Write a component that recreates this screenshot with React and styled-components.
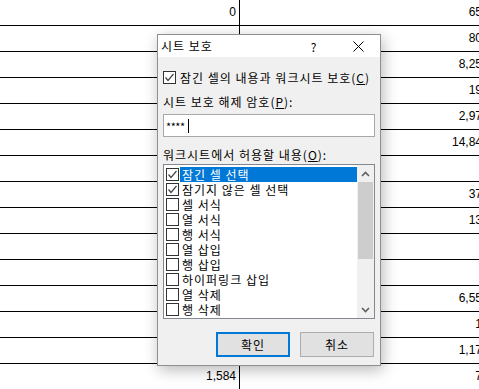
import React from "react";
import styled, { createGlobalStyle } from "styled-components";

const Global = createGlobalStyle`
  html, body { margin: 0; padding: 0; background: #fff; overflow: hidden; }
  body { font-family: "Noto Sans CJK KR", "Noto Sans", sans-serif; color: #000; }
  * { box-sizing: border-box; }
`;

const Page = styled.div`
  position: relative;
  width: 479px;
  height: 389px;
  overflow: hidden;
`;

const Sheet = styled.div`
  display: grid;
  grid-template-columns: 240px 246px;
  width: 486px;
`;

const Cell = styled.div`
  height: 26px;
  line-height: 25px;
  border-bottom: 1px solid #000;
  border-right: ${(p) => (p.$left ? "1px solid #000" : "none")};
  text-align: right;
  padding-right: ${(p) => (p.$left ? "3px" : "4px")};
  font-family: "Liberation Sans", Arial, sans-serif;
  font-size: 12px;
  white-space: nowrap;
`;

const Dialog = styled.div`
  position: absolute;
  left: 157px;
  top: 34px;
  width: 224px;
  height: 332px;
  border: 1px solid #8f8f8f;
  background: #f0f0f0;
  box-shadow: 2px 4px 14px rgba(0, 0, 0, 0.28);
  display: flex;
  flex-direction: column;
  font-size: 12px;
  letter-spacing: 1px;
`;

const TitleBar = styled.div`
  height: 22px;
  background: #fff;
  display: flex;
  align-items: center;
  padding-left: 3px;
`;

const Title = styled.div`
  flex: 1;
  font-size: 12px;
  line-height: 16px;
`;

const TitleButton = styled.div`
  width: 44px;
  height: 22px;
  display: flex;
  align-items: center;
  justify-content: center;
  font-size: 12px;
`;

const Body = styled.div`
  flex: 1;
  display: flex;
  flex-direction: column;
  padding: 0 5px 8px 5px;
`;

const CheckRow = styled.div`
  display: flex;
  align-items: center;
  height: 16px;
  margin-top: ${(p) => p.$mt || 0}px;
  gap: 4px;
  white-space: nowrap;
`;

const Box = styled.div`
  width: 13px;
  height: 13px;
  flex: none;
  border: 1px solid #333;
  background: #fff;
  display: flex;
  align-items: center;
  justify-content: center;
`;

const Label = styled.div`
  height: 16px;
  line-height: 16px;
  margin-top: ${(p) => p.$mt || 0}px;
  white-space: nowrap;
`;

const U = styled.span`
  text-decoration: underline;
  text-underline-offset: 1px;
`;

const Input = styled.div`
  margin-top: 4px;
  width: 212px;
  height: 23px;
  border: 1px solid #a8a8a8;
  background: #fff;
  display: flex;
  align-items: center;
  padding-left: 2px;
  font-size: 11px;
  letter-spacing: -0.5px;
`;

const Caret = styled.span`
  display: inline-block;
  width: 1px;
  height: 14px;
  background: #000;
  margin-left: 3px;
`;

const List = styled.div`
  margin-top: 1px;
  width: 212px;
  height: 155px;
  border: 1px solid #828790;
  background: #fff;
  display: flex;
`;

const Items = styled.div`
  flex: 1;
  padding: 2px 0 0 2px;
  display: flex;
  flex-direction: column;
`;

const Item = styled.div`
  height: 15px;
  display: flex;
  align-items: center;
`;

const ItemText = styled.div`
  flex: 1;
  height: 15px;
  line-height: 15px;
  margin-left: 1px;
  padding-left: 2px;
  white-space: nowrap;
  overflow: hidden;
  background: ${(p) => (p.$selected ? "#0078d7" : "transparent")};
  color: ${(p) => (p.$selected ? "#fff" : "#000")};
`;

const ScrollBar = styled.div`
  width: 17px;
  background: #f0f0f0;
  display: flex;
  flex-direction: column;
`;

const ArrowButton = styled.div`
  height: 17px;
  display: flex;
  align-items: center;
  justify-content: center;
`;

const Thumb = styled.div`
  height: 77px;
  margin: 0 1px;
  background: #cdcdcd;
`;

const Track = styled.div`
  flex: 1;
`;

const Buttons = styled.div`
  margin-top: 13px;
  display: flex;
  justify-content: flex-end;
  gap: 10px;
  padding-right: 1px;
`;

const Button = styled.div`
  width: 74px;
  height: 25px;
  background: #e1e1e1;
  border: ${(p) => (p.$primary ? "2px solid #0078d7" : "1px solid #adadad")};
  display: flex;
  align-items: center;
  justify-content: center;
  font-size: 12px;
`;

const Check = () => (
  <svg width="11" height="11" viewBox="0 0 11 11">
    <polyline points="1.5,5.5 4,8.5 9.5,2" fill="none" stroke="#444" strokeWidth="1.2" />
  </svg>
);

const Chevron = ({ down }) => (
  <svg width="9" height="6" viewBox="0 0 9 6">
    <polyline
      points={down ? "1,1 4.5,4.5 8,1" : "1,5 4.5,1.5 8,5"}
      fill="none"
      stroke="#606060"
      strokeWidth="1.6"
    />
  </svg>
);

const CloseIcon = () => (
  <svg width="11" height="11" viewBox="0 0 11 11">
    <path d="M0.5 0.5 L10.5 10.5 M10.5 0.5 L0.5 10.5" stroke="#000" strokeWidth="1" />
  </svg>
);

const leftVals = ["0", "", "", "", "", "", "", "", "", "", "", "", "", "", "1,584"];
const rightVals = ["65", "80", "8,25", "19", "2,97", "14,84", "", "37", "13", "", "", "6,55", "1", "1,17", "7"];

const items = [
  { t: "잠긴 셀 선택", c: true, s: true },
  { t: "잠기지 않은 셀 선택", c: true },
  { t: "셀 서식" },
  { t: "열 서식" },
  { t: "행 서식" },
  { t: "열 삽입" },
  { t: "행 삽입" },
  { t: "하이퍼링크 삽입" },
  { t: "열 삭제" },
  { t: "행 삭제" },
];

export default function App() {
  return (
    <Page>
      <Global />
      <Sheet>
        {leftVals.map((v, i) => (
          <React.Fragment key={i}>
            <Cell $left>{v}</Cell>
            <Cell>{rightVals[i]}</Cell>
          </React.Fragment>
        ))}
      </Sheet>
      <Dialog>
        <TitleBar>
          <Title>시트 보호</Title>
          <TitleButton>?</TitleButton>
          <TitleButton>
            <CloseIcon />
          </TitleButton>
        </TitleBar>
        <Body>
          <CheckRow $mt={12}>
            <Box>
              <Check />
            </Box>
            <span>
              잠긴 셀의 내용과 워크시트 보호(<U>C</U>)
            </span>
          </CheckRow>
          <Label $mt={9}>
            시트 보호 해제 암호(<U>P</U>):
          </Label>
          <Input>
            ****
            <Caret />
          </Input>
          <Label $mt={10}>
            워크시트에서 허용할 내용(<U>O</U>):
          </Label>
          <List>
            <Items>
              {items.map((it) => (
                <Item key={it.t}>
                  <Box>{it.c && <Check />}</Box>
                  <ItemText $selected={it.s}>{it.t}</ItemText>
                </Item>
              ))}
            </Items>
            <ScrollBar>
              <ArrowButton>
                <Chevron />
              </ArrowButton>
              <Thumb />
              <Track />
              <ArrowButton>
                <Chevron down />
              </ArrowButton>
            </ScrollBar>
          </List>
          <Buttons>
            <Button $primary>확인</Button>
            <Button>취소</Button>
          </Buttons>
        </Body>
      </Dialog>
    </Page>
  );
}
